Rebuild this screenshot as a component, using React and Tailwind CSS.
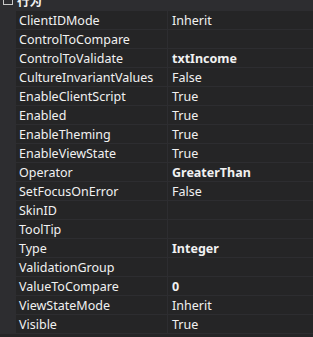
import React from "react";

const rows = [
  ["ClientIDMode", "Inherit", false],
  ["ControlToCompare", "", false],
  ["ControlToValidate", "txtIncome", true],
  ["CultureInvariantValues", "False", false],
  ["EnableClientScript", "True", false],
  ["Enabled", "True", false],
  ["EnableTheming", "True", false],
  ["EnableViewState", "True", false],
  ["Operator", "GreaterThan", true],
  ["SetFocusOnError", "False", false],
  ["SkinID", "", false],
  ["ToolTip", "", false],
  ["Type", "Integer", true],
  ["ValidationGroup", "", false],
  ["ValueToCompare", "0", true],
  ["ViewStateMode", "Inherit", false],
  ["Visible", "True", false],
];

export default function App() {
  return (
    <div
      className="w-[313px] h-[337px] overflow-hidden bg-[#252526] text-[#f1f1f1] text-[12.5px]"
      style={{ fontFamily: '"Noto Sans", "Noto Sans CJK SC", sans-serif' }}
    >
      <div className="h-[11px] bg-[#2d2d30] relative overflow-hidden">
        <div className="absolute left-[3px] top-[-5px] w-[10px] h-[10px] border border-[#c8c8c8]" />
        <div className="absolute left-[17px] top-[-8px] font-bold leading-[19px]">行为</div>
      </div>
      <div className="flex flex-col">
        {rows.map(([k, v, b]) => (
          <div key={k} className="flex h-[19px] leading-[19px]">
            <div className="w-[16px] bg-[#2d2d30] shrink-0" />
            <div className="w-[152px] shrink-0 pl-[3px] border-b border-[#2d2d30] border-r whitespace-nowrap overflow-hidden">
              {k}
            </div>
            <div className={"flex-1 pl-[4px] border-b border-[#2d2d30] whitespace-nowrap " + (b ? "font-bold" : "")}>
              {v}
            </div>
          </div>
        ))}
      </div>
    </div>
  );
}
